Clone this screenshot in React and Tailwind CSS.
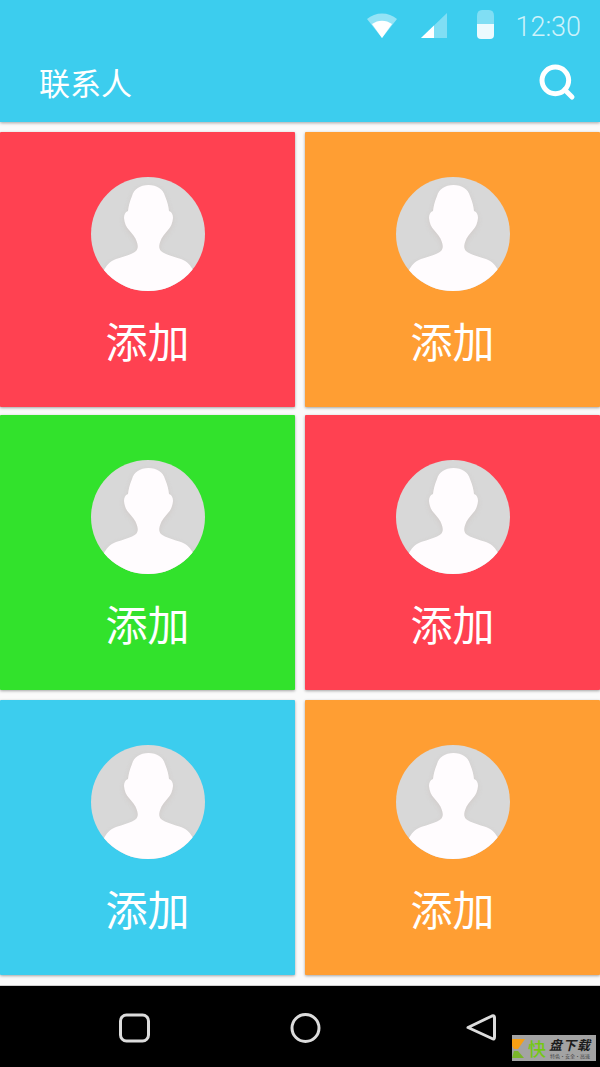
import { Search } from 'lucide-react'

const cjk = 'font-["Noto_Sans_CJK_SC",sans-serif]'

const rows = [
  { gap: 'mt-[10px]', colors: ['bg-[#ff4151]', 'bg-[#ff9e33]'] },
  { gap: 'mt-[8px]', colors: ['bg-[#32e22c]', 'bg-[#ff4151]'] },
  { gap: 'mt-[10px]', colors: ['bg-[#3ccdee]', 'bg-[#ff9e33]'] },
]

function Avatar() {
  const body =
    'M57.500 8C49 8 43 12 41 19C38.500 25 37.500 29 37 34C34 35 33 38 33 41C33.500 46 35 50 38 53C41 57 44.500 60 45.500 64C47 68 47.500 71 45 74C41 77.500 31 80 25 82C19 84 15 89 13 93L13 114L102 114L102 93C100 89 96 84 90 82C84 80 74 77.500 70 74C67.500 71 68 68 69.500 64C70.500 60 74 57 77 53C80 50 81.500 46 82 41C82 38 81 35 78 34C77.500 29 76.500 25 74 19C72 12 66 8 57.500 8Z'
  return (
    <svg width="114" height="114" viewBox="0 0 114 114" className="block">
      <defs>
        <clipPath id="avatar-clip">
          <circle cx="57" cy="57" r="57" />
        </clipPath>
        <filter id="avatar-soft" x="-20%" y="-20%" width="140%" height="140%">
          <feGaussianBlur stdDeviation="2.500" />
        </filter>
      </defs>
      <g clipPath="url(#avatar-clip)">
        <rect width="114" height="114" fill="#d8d8d8" />
        <path d={body} fill="#c9bab6" opacity="0.4" filter="url(#avatar-soft)" transform="translate(0 2)" />
        <path d={body} fill="#fffcfe" />
      </g>
    </svg>
  )
}

function Card({ color }) {
  return (
    <div className={`${color} h-[275px] flex flex-col items-center pt-[45px] rounded-[1px] shadow-[0_1px_3px_rgba(0,0,0,0.35)]`}>
      <Avatar />
      <span className={`${cjk} mt-[23px] text-[42px] leading-[52px] text-white`}>添加</span>
    </div>
  )
}

function StatusBar() {
  return (
    <div className="h-[46px] flex items-start justify-end pr-[19px]">
      <svg width="30" height="26" viewBox="0 0 30 26" className="mt-[13px]">
        <path d="M0 6C8 -1.500 22 -1.500 30 6L15 25Z" fill="#fff" opacity="0.45" />
        <path d="M5 11C11 6.500 19 6.500 25 11L15 25Z" fill="#fff" />
      </svg>
      <svg width="26" height="25" viewBox="0 0 26 25" className="ml-[24px] mt-[13px]">
        <path d="M0 25L26 0V25Z" fill="#fff" opacity="0.35" />
        <path d="M0 25L13 12.500V25Z" fill="#fff" />
      </svg>
      <svg width="17" height="29" viewBox="0 0 17 29" className="ml-[30px] mt-[10px]">
        <path d="M0 6Q0 0 5 0H12Q17 0 17 6V14H0Z" fill="#fff" opacity="0.35" />
        <path d="M0 14H17V25Q17 29 13 29H4Q0 29 0 25Z" fill="#fff" opacity="0.9" />
      </svg>
      <span className="ml-[21px] mt-[11px] font-['Roboto',sans-serif] font-light text-[27px] leading-[32px] text-white/75">12:30</span>
    </div>
  )
}

function NavBar() {
  return (
    <div className="relative mt-[10px] h-[82px] bg-black flex items-center border-t border-[#cfcfcf]">
      <svg width="600" height="60" viewBox="0 0 600 60" className="block mt-[5px]" fill="none" stroke="#dcdcdc" strokeWidth="3">
        <rect x="120.500" y="16" width="28" height="26" rx="6" />
        <circle cx="305.500" cy="29" r="13.500" />
        <path d="M468 28.500L492 17Q494.500 16 494.500 19V38Q494.500 41 492 39.500Z" strokeLinejoin="round" />
      </svg>
      {/* download-site badge sitting over the corner of the bar */}
      <div className="absolute left-[512px] top-[49px] w-[84px] h-[26px] bg-[#a3a3a3] flex items-center overflow-hidden">
        <svg width="13" height="26" viewBox="0 0 13 26" className="shrink-0">
          <path d="M0 4H13L6 14H2L0 11Z" fill="#f7a014" />
          <path d="M2 16H6L12 23H0Z" fill="#7ab52a" />
        </svg>
        <span className={`${cjk} ml-[3px] font-medium text-[18px] leading-[26px] text-[#74c814]`}>快</span>
        <div className="ml-[3px] flex flex-col items-center gap-[1px]">
          <span className={`${cjk} font-bold text-[13px] leading-[14px] tracking-[1px] text-[#1c1c1c] italic`}>盘下载</span>
          <span className={`${cjk} text-[5px] leading-[6px] text-[#444] whitespace-nowrap`}>特色·安全·高速</span>
        </div>
      </div>
    </div>
  )
}

export default function App() {
  return (
    <div className="w-[600px] h-[1067px] bg-[#fafafa] overflow-hidden flex flex-col">
      <header className="h-[122px] bg-[#3ccdee] shadow-[0_1px_3px_rgba(0,0,0,0.35)]">
        <StatusBar />
        <div className="flex items-center justify-between pl-[39px] pr-[23px] mt-[10px]">
          <h1 className={`${cjk} -mt-[1px] text-[31px] leading-[54px] font-normal text-white`}>联系人</h1>
          <Search size={40} strokeWidth={3} color="#fff" className="-mt-[1px]" />
        </div>
      </header>
      <main>
        {rows.map((row, i) => (
          <div key={i} className={`${row.gap} grid grid-cols-2 gap-[10px]`}>
            {row.colors.map((color, j) => (
              <Card key={j} color={color} />
            ))}
          </div>
        ))}
      </main>
      <NavBar />
    </div>
  )
}
